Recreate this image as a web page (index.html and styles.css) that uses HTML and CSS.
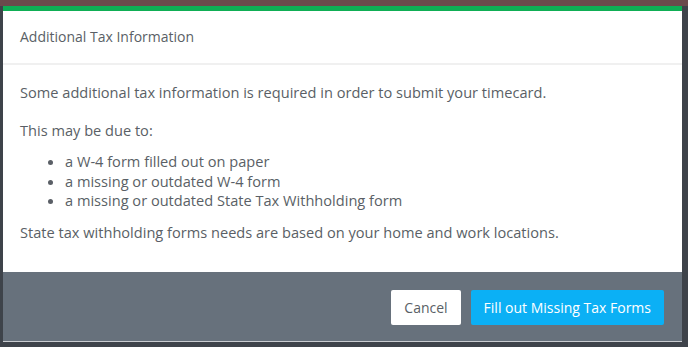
FILE: index.html
```html
<!DOCTYPE html>
<html lang="en">
<head>
  <meta charset="UTF-8" />
  <title>Additional Tax Information</title>
  <link rel="stylesheet" href="styles.css">
</head>
<body>
  <div class="backdrop-top"></div>
  <div class="modal">
    <div class="modal-header">Additional Tax Information</div>
    <div class="modal-body">
      <p>Some additional tax information is required in order to submit your timecard.</p>
      <p class="lead">This may be due to:</p>
      <ul>
        <li>a W-4 form filled out on paper</li>
        <li>a missing or outdated W-4 form</li>
        <li>a missing or outdated State Tax Withholding form</li>
      </ul>
      <p>State tax withholding forms needs are based on your home and work locations.</p>
    </div>
    <div class="modal-footer">
      <button class="btn btn-cancel">Cancel</button>
      <button class="btn btn-primary">Fill out Missing Tax Forms</button>
    </div>
  </div>
</body>
</html>
```

FILE: styles.css
```css
body {
  margin: 0;
  background: #3e434a;
  font-family: "Open Sans", "Liberation Sans", sans-serif;
  color: #5a5f66;
}
.backdrop-top {
  height: 6px;
  background: #6b4a4c;
}
.modal {
  margin-left: 3px;
  width: 679px;
  background: #fff;
  border-top: 5px solid #0fae55;
  border-bottom: 1px solid #c9ccd0;
}
.modal-header {
  height: 52px;
  line-height: 52px;
  padding: 0 17px;
  font-size: 14px;
  border-bottom: 2px solid #f0f0f0;
}
.modal-body {
  padding: 17px 17px 30px;
  font-size: 14.6px;
}
.modal-body p {
  margin: 0 0 18px;
  line-height: 20px;
}
.modal-body p.lead {
  margin-bottom: 12px;
}
.modal-body p:last-child {
  margin-bottom: 0;
}
.modal-body ul {
  margin: 0 0 11px;
  padding-left: 45px;
  line-height: 19.5px;
}
.modal-footer {
  display: flex;
  justify-content: flex-end;
  gap: 10px;
  padding: 18px 18px 16px;
  background: #67717c;
}
.btn {
  height: 35px;
  border: none;
  border-radius: 2px;
  font-family: inherit;
  font-size: 14px;
  padding: 0 13px;
}
.btn-cancel {
  background: #fff;
  color: #5a5f66;
}
.btn-primary {
  background: #0bb0f5;
  color: #fff;
}
```
